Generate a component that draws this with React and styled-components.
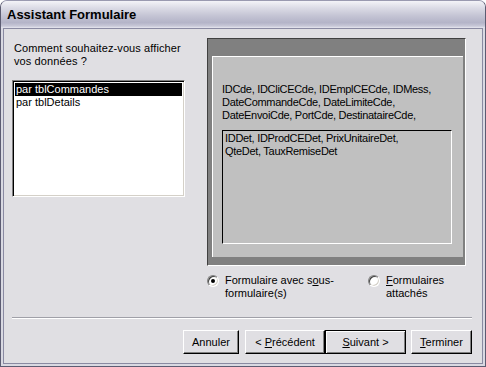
import React from "react";
import styled, { createGlobalStyle } from "styled-components";

const Global = createGlobalStyle`
  html, body { margin: 0; padding: 0; background: #ffffff; }
  body { font-family: "Liberation Sans", Arial, sans-serif; font-size: 11px; color: #000; }
`;

const Frame = styled.div`
  width: 486px;
  height: 367px;
  box-sizing: border-box;
  display: flex;
  flex-direction: column;
  border-radius: 7px 7px 0 0;
  background: #d9d9e2;
  border: 1px solid #5c5c72;
  border-top-color: #9a9ab0;
  overflow: hidden;
`;

const TitleBar = styled.div`
  height: 27px;
  flex: none;
  display: flex;
  align-items: center;
  padding-left: 6px;
  background: linear-gradient(#f4f4f8 0%, #dcdce6 25%, #c4c4d4 55%, #b4b4c8 80%, #c8c8d8 93%, #e8e8f0 100%);
  font-family: "Liberation Sans", Arial, sans-serif;
  font-weight: bold;
  font-size: 13px;
  color: #000;
`;

const Body = styled.div`
  flex: 1;
  margin: 0 2px 2px 2px;
  border: 1px solid #8a8aa2;
  background: #e0dfe3;
  display: flex;
  flex-direction: column;
  padding: 9px 10px 0 7px;
`;

const Top = styled.div`
  display: grid;
  grid-template-columns: 174px 259px;
  column-gap: 22px;
`;

const LeftCol = styled.div`
  display: flex;
  flex-direction: column;
  padding-top: 4px;
  padding-left: 1px;
`;

const Prompt = styled.div`
  line-height: 13px;
  padding-left: 2px;
  height: 38px;
  letter-spacing: 0.1px;
`;

const ListBox = styled.div`
  height: 117px;
  background: #ffffff;
  border-top: 1px solid #808080;
  border-left: 1px solid #808080;
  border-right: 1px solid #ffffff;
  border-bottom: 1px solid #ffffff;
  box-shadow: inset 1px 1px 0 #000, inset -1px -1px 0 #d4d0c8;
  padding: 2px;
  box-sizing: border-box;
`;

const ListItem = styled.div`
  height: 13px;
  line-height: 13px;
  padding-left: 1px;
  background: ${(p) => (p.$selected ? "#000000" : "transparent")};
  color: ${(p) => (p.$selected ? "#ffffff" : "#000000")};
`;

const RightCol = styled.div`
  display: flex;
  flex-direction: column;
`;

const Preview = styled.div`
  height: 228px;
  box-sizing: border-box;
  background: #808080;
  border-top: 1px solid #404040;
  border-left: 1px solid #404040;
  border-right: 1px solid #ffffff;
  border-bottom: 1px solid #ffffff;
  padding: 17px 2px 8px 4px;
  display: flex;
`;

const Panel = styled.div`
  flex: 1;
  display: flex;
  flex-direction: column;
  background: #c0c0c0;
  border-top: 1px solid #ffffff;
  border-left: 1px solid #ffffff;
  padding: 26px 11px 13px 9px;
  letter-spacing: -0.3px;
`;

const Fields = styled.div`
  line-height: 13px;
  margin-bottom: 8px;
`;

const SubBox = styled.div`
  flex: 1;
  background: #c0c0c0;
  border-top: 1px solid #000;
  border-left: 1px solid #000;
  border-right: 1px solid #ffffff;
  border-bottom: 1px solid #ffffff;
  padding: 1px 2px;
  line-height: 13px;
`;

const Radios = styled.div`
  display: grid;
  grid-template-columns: 161px 1fr;
  padding-top: 8px;
`;

const RadioOpt = styled.div`
  display: flex;
  align-items: flex-start;
  gap: 6px;
  line-height: 13px;
`;

const RadioDot = styled.div`
  width: 12px;
  height: 12px;
  flex: none;
  box-sizing: border-box;
  border-radius: 50%;
  background: #ffffff;
  border: 1px solid;
  border-color: #808080 #ffffff #ffffff #808080;
  box-shadow: inset 1px 1px 0 #404040, inset -1px -1px 0 #d4d0c8;
  display: flex;
  align-items: center;
  justify-content: center;
  margin-top: 1px;
  &::after {
    content: "";
    width: 4px;
    height: 4px;
    border-radius: 50%;
    background: ${(p) => (p.$on ? "#000" : "transparent")};
  }
`;

const U = styled.span`
  text-decoration: underline;
`;

const Separator = styled.div`
  margin-top: 17px;
  height: 0;
  border-top: 1px solid #a0a0a8;
  border-bottom: 1px solid #ffffff;
  margin-left: 1px;
`;

const ButtonRow = styled.div`
  display: flex;
  justify-content: flex-end;
  padding-top: 11px;
`;

const Button = styled.button`
  height: 24px;
  width: ${(p) => p.$w}px;
  margin-left: ${(p) => p.$gap || 0}px;
  box-sizing: border-box;
  background: #e0dfe3;
  font-family: "Liberation Sans", Arial, sans-serif;
  font-size: 11px;
  color: #000;
  padding: 0;
  border: 1px solid;
  border-color: ${(p) => (p.$default ? "#000 #000 #000 #000" : "#ffffff #000 #000 #ffffff")};
  box-shadow: ${(p) =>
    p.$default
      ? "inset 1px 1px 0 #ffffff, inset -1px -1px 0 #808080"
      : "inset -1px -1px 0 #808080"};
`;

export default function App() {
  return (
    <>
      <Global />
      <Frame>
        <TitleBar>Assistant Formulaire</TitleBar>
        <Body>
          <Top>
            <LeftCol>
              <Prompt>
                Comment souhaitez-vous afficher
                <br />
                vos données ?
              </Prompt>
              <ListBox>
                <ListItem $selected>par tblCommandes</ListItem>
                <ListItem>par tblDetails</ListItem>
              </ListBox>
            </LeftCol>
            <RightCol>
              <Preview>
                <Panel>
                  <Fields>
                    IDCde, IDCliCECde, IDEmplCECde, IDMess,
                    <br />
                    DateCommandeCde, DateLimiteCde,
                    <br />
                    DateEnvoiCde, PortCde, DestinataireCde,
                  </Fields>
                  <SubBox>
                    IDDet, IDProdCEDet, PrixUnitaireDet,
                    <br />
                    QteDet, TauxRemiseDet
                  </SubBox>
                </Panel>
              </Preview>
              <Radios>
                <RadioOpt>
                  <RadioDot $on />
                  <div>
                    Formulaire avec s<U>o</U>us-
                    <br />
                    formulaire(s)
                  </div>
                </RadioOpt>
                <RadioOpt>
                  <RadioDot />
                  <div>
                    <U>F</U>ormulaires
                    <br />
                    attachés
                  </div>
                </RadioOpt>
              </Radios>
            </RightCol>
          </Top>
          <Separator />
          <ButtonRow>
            <Button $w={56}>Annuler</Button>
            <Button $w={80} $gap={6}>
              &lt; <U>P</U>récédent
            </Button>
            <Button $w={81} $default>
              <U>S</U>uivant &gt;
            </Button>
            <Button $w={61} $gap={5}>
              <U>T</U>erminer
            </Button>
          </ButtonRow>
        </Body>
      </Frame>
    </>
  );
}
